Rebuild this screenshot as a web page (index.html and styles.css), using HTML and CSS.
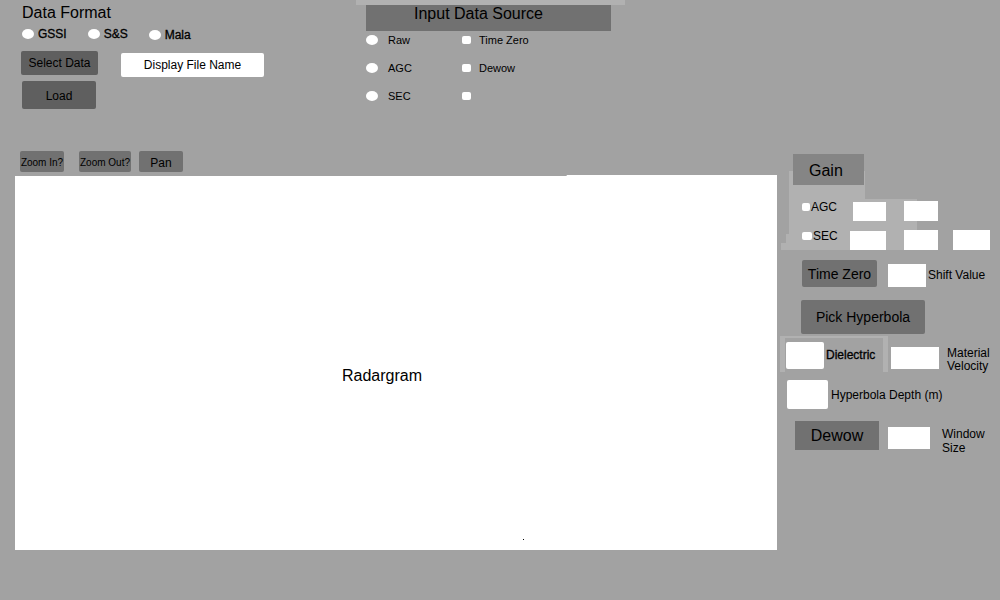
FILE: index.html
```html
<!DOCTYPE html>
<html lang="en">
<head>
<meta charset="utf-8">
<title>Radargram Viewer</title>
<link rel="stylesheet" href="styles.css">
</head>
<body>
<header class="top">
  <section class="format">
    <h2 class="title">Data Format</h2>
    <div class="format-options">
      <label class="opt bold"><input class="radio" type="radio" name="format">GSSI</label>
      <label class="opt bold"><input class="radio" type="radio" name="format">S&amp;S</label>
      <label class="opt bold low"><input class="radio" type="radio" name="format">Mala</label>
    </div>
    <div class="file-row">
      <button class="btn dark select" type="button">Select Data</button>
      <input class="field file-name" type="text" value="Display File Name" aria-label="File name">
    </div>
    <button class="btn dark load" type="button">Load</button>
  </section>
  <section class="source">
    <h2 class="title source-title">Input Data Source</h2>
    <div class="source-grid">
      <label class="src"><input class="radio" type="radio" name="source">Raw</label>
      <label class="src step"><input class="check" type="checkbox">Time Zero</label>
      <label class="src"><input class="radio" type="radio" name="source">AGC</label>
      <label class="src step"><input class="check" type="checkbox">Dewow</label>
      <label class="src"><input class="radio" type="radio" name="source">SEC</label>
      <label class="src step"><input class="check" type="checkbox" aria-label="Other step"></label>
    </div>
  </section>
</header>
<main class="work">
  <section class="viewer">
    <div class="tools">
      <button class="btn tool zoom-in" type="button">Zoom In?</button>
      <button class="btn tool zoom-out" type="button">Zoom Out?</button>
      <button class="btn tool pan" type="button">Pan</button>
    </div>
    <div class="plot">
      <span class="plot-name">Radargram</span>
      <span class="dot"></span>
    </div>
  </section>
  <aside class="panel">
    <section class="gain">
      <h2 class="title gain-title">Gain</h2>
      <div class="gain-row">
        <label class="gain-opt"><input class="check" type="checkbox">AGC</label>
        <input class="field gain-a" type="text" aria-label="AGC value 1">
        <input class="field gain-b" type="text" aria-label="AGC value 2">
      </div>
      <div class="gain-row">
        <label class="gain-opt"><input class="check wide" type="checkbox">SEC</label>
        <input class="field gain-a long" type="text" aria-label="SEC value 1">
        <input class="field gain-b" type="text" aria-label="SEC value 2">
        <input class="field gain-c" type="text" aria-label="SEC value 3">
      </div>
    </section>
    <div class="row shift-row">
      <button class="btn time-zero" type="button">Time Zero</button>
      <input class="field shift" id="shift" type="text">
      <label class="shift-label" for="shift">Shift Value</label>
    </div>
    <button class="btn pick" type="button">Pick Hyperbola</button>
    <div class="row material-row">
      <div class="dielectric">
        <input class="field rounded diel" id="diel" type="text">
        <label class="bold" for="diel">Dielectric</label>
      </div>
      <input class="field velocity" id="velocity" type="text">
      <label class="velocity-label" for="velocity">Material Velocity</label>
    </div>
    <div class="row depth-row">
      <input class="field rounded depth" id="depth" type="text">
      <label for="depth">Hyperbola Depth (m)</label>
    </div>
    <div class="row dewow-row">
      <button class="btn dewow" type="button">Dewow</button>
      <input class="field window" id="window" type="text">
      <label class="window-label" for="window">Window Size</label>
    </div>
  </aside>
</main>
</body>
</html>
```
FILE: styles.css
```css
* { box-sizing: border-box; }

body {
  margin: 0;
  min-height: 100vh;
  display: flex;
  flex-direction: column;
  background: #a2a2a2;
  color: #000;
  font: 12px/14px "Liberation Sans", Arial, sans-serif;
}

.title { margin: 0; font-size: 16px; line-height: 18px; font-weight: 400; }
.bold { -webkit-text-stroke: 0.3px #000; }

.btn {
  padding: 0;
  border: 0;
  border-radius: 2px;
  background: #717171;
  color: #000;
  font: inherit;
  white-space: nowrap;
}
.btn.dark { background: #5f5f5f; }

.field {
  display: block;
  min-width: 0;
  padding: 0;
  border: 0;
  background: #fff;
  color: #000;
  font: inherit;
}
.rounded { border-radius: 2px; }

.radio, .check {
  appearance: none;
  flex: none;
  margin: 0;
  background: #fff;
}
.radio { width: 12px; height: 10px; border-radius: 50%; }
.check { width: 9px; height: 8px; border-radius: 2px; }

/* Top bar */
.top { display: flex; min-height: 151px; }
.format { width: 35.6%; padding: 4px 0 0 21px; }
.format > .title { padding-left: 1px; }
.format-options { display: flex; gap: 21px; padding: 4px 0 0 1px; }
.opt { display: flex; align-items: center; gap: 4px; }
.low { padding-top: 2px; }
.file-row { display: flex; align-items: flex-start; gap: 23px; margin-top: 9px; }
.select { width: 77px; height: 24px; }
.file-name { width: 143px; height: 24px; margin-top: 2px; border-radius: 2px; text-align: center; }
.load { display: block; width: 74px; height: 28px; margin: 4px 0 0 1px; padding-top: 2px; }

.source { width: 269px; }
.source-title {
  height: 31px;
  padding: 0 24px 0 0;
  border: solid #b1b1b1;
  border-width: 5px 0 0;
  background: linear-gradient(#717171, #717171) 10px 0 / 245px 26px no-repeat;
  text-align: center;
}
.source-grid {
  display: grid;
  grid-template-columns: 96px auto;
  grid-auto-rows: 18px;
  row-gap: 10px;
  padding-left: 10px;
  font-size: 11px;
}
.src { display: flex; align-items: center; gap: 10px; }
.step { gap: 8px; }

/* Work area */
.work { flex: 1; display: flex; gap: 3px; padding: 0 0 50px 15px; }
.viewer { flex: 1; display: flex; flex-direction: column; }
.tools { display: flex; padding: 0 0 3px 5px; }
.tool { height: 21px; padding-top: 2px; }
.zoom-in { width: 44px; margin-right: 15px; font-size: 10px; }
.zoom-out { width: 52px; margin-right: 8px; font-size: 10px; }
.pan { width: 44px; }
.plot {
  position: relative;
  flex: 1;
  display: flex;
  align-items: center;
  justify-content: center;
  padding: 27px 28px 0 0;
  background: linear-gradient(#a2a2a2, #a2a2a2) 0 0 / 72.4% 1px no-repeat #fff;
}
.plot-name { font-size: 16px; line-height: 18px; }
.dot { position: absolute; left: 66.7%; bottom: 10px; width: 1px; height: 1px; background: #000; }

/* Side panel */
.panel { width: 220px; padding-top: 3px; }
.row { display: flex; }

.gain {
  padding-left: 13px;
  background:
    linear-gradient(#b1b1b1, #b1b1b1) 9px 17px / 76px 60px no-repeat,
    linear-gradient(#b1b1b1, #b1b1b1) 9px 45px / 128px 50px no-repeat,
    linear-gradient(#b1b1b1, #b1b1b1) 6px 80px / 16px 16px no-repeat,
    linear-gradient(#b1b1b1, #b1b1b1) 1px 89px / 123px 7px no-repeat;
}
.gain-title { width: 71px; padding: 8px 0 5px 16px; background: #858585; }
.gain-row {
  display: grid;
  grid-template-columns: 53px 49px 49px 37px;
  align-items: center;
  height: 20px;
  margin-top: 16px;
  padding-left: 9px;
}
.gain-row + .gain-row { margin-top: 9px; }
.gain-opt { display: flex; align-items: center; align-self: start; gap: 1px; line-height: 12px; }
.gain-opt .check { width: 8px; }
.gain-opt .wide { width: 10px; }
.gain-a { width: 33px; height: 19px; justify-self: end; margin-right: 18px; }
.long { width: 36px; }
.gain-b { width: 34px; height: 20px; }
.gain-c { width: 37px; height: 20px; }

.shift-row { align-items: flex-end; padding-left: 22px; margin-top: 10px; }
.time-zero { width: 75px; height: 27px; font-size: 14px; }
.shift { width: 38px; height: 23px; margin-left: 11px; }
.shift-label { padding: 0 0 5px 2px; }

.pick { display: block; width: 124px; height: 34px; margin: 13px 0 0 21px; font-size: 14px; }

.material-row { margin-top: 2px; align-items: flex-start; }
.dielectric {
  display: flex;
  align-items: center;
  gap: 2px;
  width: 108px;
  height: 36px;
  padding-left: 1px;
  border: solid #b1b1b1;
  border-width: 2px 5px 0;
}
.diel { width: 38px; height: 27px; }
.velocity { width: 48px; height: 22px; margin: 11px 8px 0 3px; }
.velocity-label { width: 46px; margin-top: 11px; line-height: 13px; }

.depth-row { align-items: center; gap: 3px; padding-left: 7px; margin-top: 7px; }
.depth { width: 41px; height: 29px; }

.dewow-row { align-items: flex-start; padding-left: 15px; margin-top: 12px; }
.dewow { width: 84px; height: 29px; border-radius: 0; font-size: 16px; }
.window { width: 42px; height: 22px; margin: 6px 12px 0 9px; }
.window-label { width: 46px; margin-top: 6px; }
```
